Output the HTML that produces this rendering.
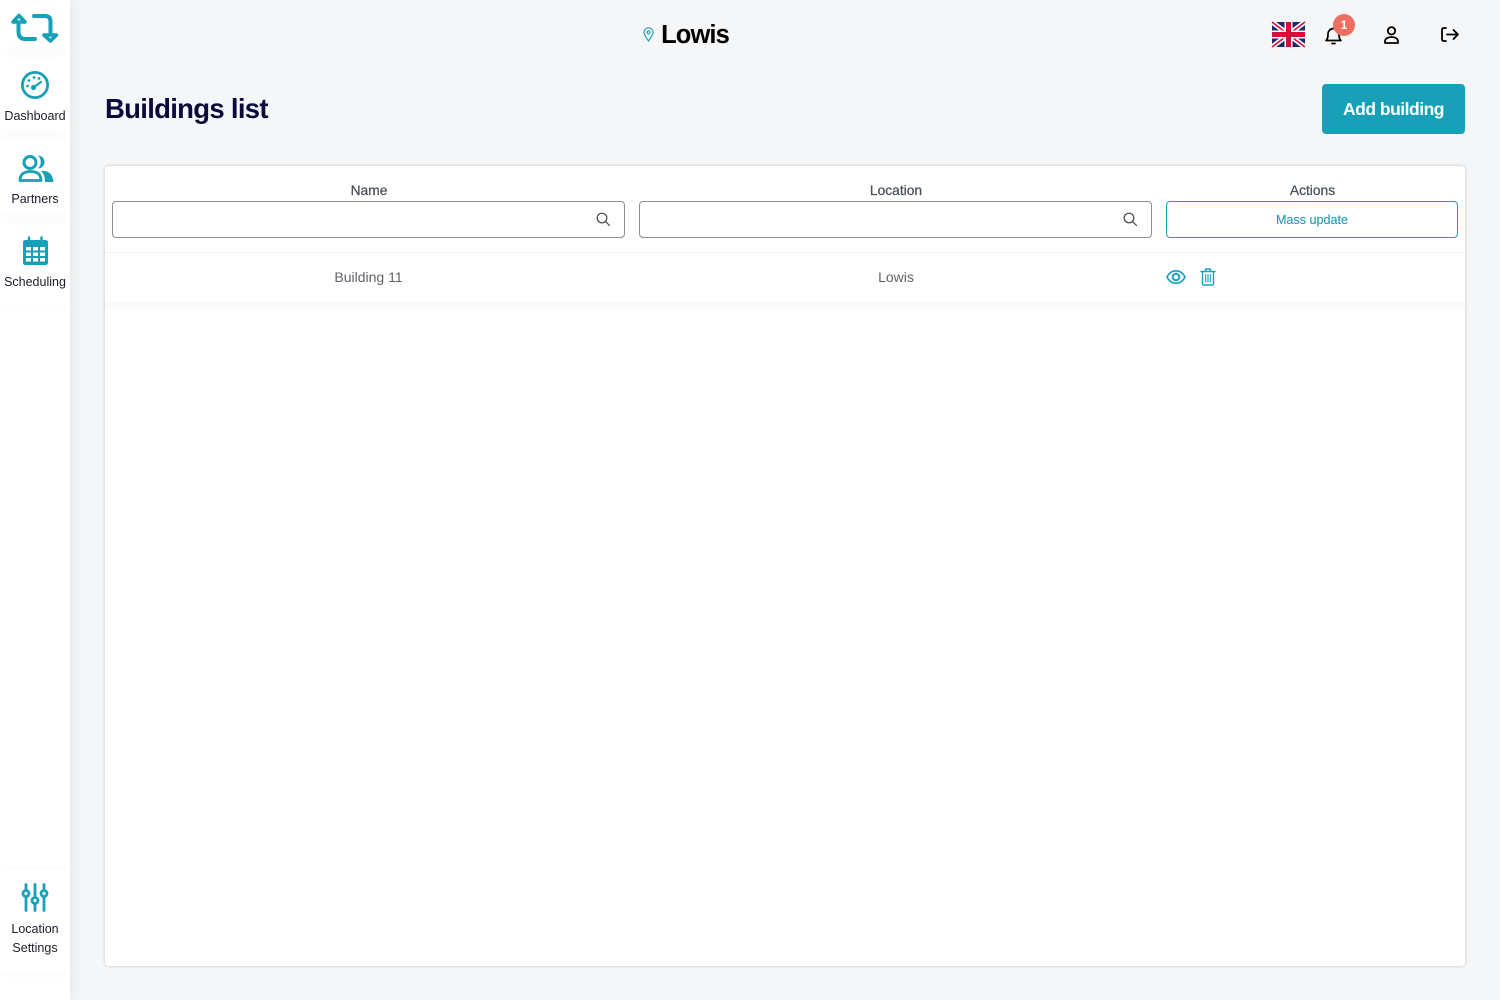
<!DOCTYPE html>
<html><head><meta charset="utf-8"><style>
html,body{margin:0;padding:0}
body{width:1500px;height:1000px;background:#f4f6f8;position:relative;overflow:hidden;font-family:"Liberation Sans",sans-serif}
.a{position:absolute}
.t{position:absolute;white-space:nowrap;text-align:center;transform:translateX(-50%)}
.side{left:0;top:0;width:70px;height:1000px;background:#fff;box-shadow:4px 0 10px rgba(90,100,150,.08);overflow:hidden}
.item{position:absolute;left:0;width:70px;background:#fff;box-shadow:0 0 12px rgba(0,0,0,.035)}
.nav{font-size:12.500px;color:#1c1c2c;line-height:19px}
svg{position:absolute;overflow:visible}
.card{left:105px;top:166px;width:1360px;height:800px;background:#fff;border-radius:4px;box-shadow:0 0 3px rgba(0,0,0,.22)}
.th{font-size:13.800px;color:#48505a;-webkit-text-stroke:.25px #48505a}
.inp{box-sizing:border-box;height:37px;top:201px;border:1px solid #8f8f8f;border-radius:4px;background:#fff}
.td{font-size:14px;color:#5f6368}
</style></head><body>
<div class="a side">
<div class="item" style="top:0;height:47px"></div>
<div class="item" style="top:57px;height:73px"></div>
<div class="item" style="top:140px;height:73px"></div>
<div class="item" style="top:223px;height:82px"></div>
<div class="item" style="top:870px;height:102px"></div>
</div>
<svg style="left:0;top:0" width="70" height="50" viewBox="0 0 70 50" fill="none" stroke="#17a0b7" stroke-width="4" stroke-linecap="round" stroke-linejoin="round"><path d="M18.500 23V32Q18.500 39 25.500 39H35"/><path d="M13 22L19 15.500L25 22Z" fill="#fff" stroke-width="3.600"/><path d="M34 16H45Q50.500 16 50.500 21.500V34"/><path d="M44 35H56.500L50.500 41Z" fill="#fff" stroke-width="3.600"/></svg>
<svg style="left:21px;top:71px" width="28" height="28" viewBox="0 0 28 28" fill="none" stroke="#17a0b7"><circle cx="14" cy="14" r="12.600" stroke-width="2.800"/><circle cx="12.500" cy="16.500" r="2.600" fill="#17a0b7" stroke="none"/><path d="M13 16L20 11" stroke-width="2.200" stroke-linecap="round"/><g fill="#17a0b7" stroke="none"><circle cx="6.500" cy="15" r="1.400"/><circle cx="8" cy="9.500" r="1.400"/><circle cx="13" cy="6.500" r="1.400"/><circle cx="18" cy="7.500" r="1.400"/></g></svg>
<div class="t nav" style="left:35px;top:107px">Dashboard</div>
<svg style="left:18px;top:153px" width="36" height="30" viewBox="0 0 36 30" fill="none" stroke="#17a0b7"><circle cx="12" cy="9.500" r="6" stroke-width="3"/><path d="M2 27.500C2 21 6 18.500 12.500 18.500S23 21 23 27.500Z" stroke-width="2.800" stroke-linejoin="round"/><path d="M20 2.500A6.500 6.500 0 1 1 20 15.500A9 9 0 0 0 20 2.500Z" fill="#17a0b7" stroke="none"/><path d="M23 18C31 17 35 22 35.500 29H27C27 24 26 21 23 18Z" fill="#17a0b7" stroke="none"/></svg>
<div class="t nav" style="left:35px;top:190px">Partners</div>
<svg style="left:23px;top:237px" width="25" height="28" viewBox="0 0 25 28"><path d="M2.500 3H22.500Q25 3 25 5.500V25.500Q25 28 22.500 28H2.500Q0 28 0 25.500V5.500Q0 3 2.500 3Z" fill="#17a0b7"/><path d="M6 .5V5M18.500 .5V5" stroke="#17a0b7" stroke-width="2.400" stroke-linecap="round"/><g fill="#fff"><rect x="3" y="10" width="5" height="3.500"/><rect x="10" y="10" width="5" height="3.500"/><rect x="17" y="10" width="5" height="3.500"/><rect x="3" y="15.500" width="5" height="3.500"/><rect x="10" y="15.500" width="5" height="3.500"/><rect x="17" y="15.500" width="5" height="3.500"/><rect x="3" y="21" width="5" height="3.500"/><rect x="10" y="21" width="5" height="3.500"/><rect x="17" y="21" width="5" height="3.500"/></g></svg>
<div class="t nav" style="left:35px;top:273px">Scheduling</div>
<svg style="left:22px;top:883px" width="26" height="29" viewBox="0 0 26 29" fill="none" stroke="#17a0b7" stroke-width="2.800" stroke-linecap="round"><path d="M4 1.500V7M4 14V27.500M13 1.500V14M13 21V27.500M22 1.500V7M22 14V27.500"/><circle cx="4" cy="10.500" r="3"/><circle cx="13" cy="17.500" r="3"/><circle cx="22" cy="10.500" r="3"/></svg>
<div class="t nav" style="left:35px;top:920px">Location</div>
<div class="t nav" style="left:35px;top:939px">Settings</div>

<svg style="left:643px;top:27px" width="11" height="15" viewBox="0 0 11 15" fill="none" stroke="#17a0b7" stroke-width="1.200"><path d="M5.500 14C3 10.500 1 8 1 5.300A4.500 4.500 0 0 1 10 5.300C10 8 8 10.500 5.500 14Z"/><circle cx="5.500" cy="5.300" r="1.500"/></svg>
<div class="t" style="left:695px;top:19px;font-size:25.500px;line-height:32px;font-weight:bold;color:#000;letter-spacing:-.9px">Lowis</div>

<svg style="left:1272px;top:22px" width="33" height="25" viewBox="0 0 33 25"><rect width="33" height="25" fill="#1b2a6b"/><path d="M0 0L33 25M33 0L0 25" stroke="#fff" stroke-width="5"/><path d="M0 0L33 25M33 0L0 25" stroke="#d0103a" stroke-width="1.600"/><path d="M16.500 0V25M0 12.500H33" stroke="#fff" stroke-width="8"/><path d="M16.500 0V25M0 12.500H33" stroke="#d0103a" stroke-width="5"/></svg>
<svg style="left:1325px;top:26px" width="17" height="19" viewBox="0 0 17 19" fill="none" stroke="#000" stroke-width="1.700" stroke-linejoin="round"><path d="M1 14.500C3 13 3 10.500 3 8A5.500 5.500 0 0 1 14 8C14 10.500 14 13 16 14.500Z"/><path d="M7 17.500H10" stroke-linecap="round"/></svg>
<div class="a" style="left:1333px;top:14px;width:22px;height:22px;border-radius:50%;background:#ee6e60;color:#fff;font-size:12px;font-weight:bold;line-height:22px;text-align:center">1</div>
<svg style="left:1384px;top:26px" width="15" height="18" viewBox="0 0 15 18" fill="none" stroke="#000" stroke-width="1.800" stroke-linejoin="round"><circle cx="7.500" cy="4.800" r="3.700"/><path d="M1 17V15.500C1 12.500 4 11 7.500 11S14 12.500 14 15.500V17Z"/></svg>
<svg style="left:1441px;top:27px" width="18" height="15" viewBox="0 0 18 15" fill="none" stroke="#000" stroke-width="1.800" stroke-linecap="round" stroke-linejoin="round"><path d="M5 1H3Q1 1 1 3V12Q1 14 3 14H5"/><path d="M6 7.500H17M12.500 3L17 7.500L12.500 12"/></svg>

<div class="a" style="left:105px;top:91px;font-size:27.500px;line-height:36px;font-weight:bold;color:#0a0a3c;white-space:nowrap;letter-spacing:-.7px">Buildings list</div>
<div class="a" style="left:1322px;top:84px;width:143px;height:50px;border-radius:4px;background:#17a0b7;color:#fff;font-size:17.500px;font-weight:bold;line-height:50px;text-align:center;white-space:nowrap;letter-spacing:-.5px">Add building</div>

<div class="a card"></div>
<div class="t th" style="left:369px;top:183px">Name</div>
<div class="t th" style="left:896px;top:183px">Location</div>
<div class="t th" style="left:1312.500px;top:183px">Actions</div>
<div class="a inp" style="left:112px;width:513px"></div>
<div class="a inp" style="left:639px;width:513px"></div>
<svg style="left:596px;top:212px" width="14" height="14" viewBox="0 0 14 14" fill="none" stroke="#444" stroke-width="1.200"><circle cx="6" cy="6" r="4.800"/><path d="M9.500 9.500L13.500 13.500" stroke-linecap="round"/></svg>
<svg style="left:1123px;top:212px" width="14" height="14" viewBox="0 0 14 14" fill="none" stroke="#444" stroke-width="1.200"><circle cx="6" cy="6" r="4.800"/><path d="M9.500 9.500L13.500 13.500" stroke-linecap="round"/></svg>
<div class="a" style="box-sizing:border-box;left:1166px;top:201px;width:292px;height:37px;border:1px solid #17a0b7;border-radius:4px;background:#fff;color:#2a9cb8;font-size:12.600px;line-height:36px;text-align:center;-webkit-text-stroke:.15px #2a9cb8">Mass update</div>
<div class="a" style="left:105px;top:252px;width:1360px;height:1px;background:#f3f3f3"></div>
<div class="a" style="left:105px;top:302px;width:1360px;height:14px;background:linear-gradient(#f9f9f9,#fff)"></div>
<div class="t td" style="left:368.500px;top:269px">Building 11</div>
<div class="t td" style="left:896px;top:269px">Lowis</div>
<svg style="left:1166px;top:269px" width="20" height="16" viewBox="0 0 20 16" fill="none" stroke="#17a0b7" stroke-width="1.600"><path d="M1 8C3 4 6 1.800 10 1.800S17 4 19 8C17 12 14 14.200 10 14.200S3 12 1 8Z"/><circle cx="10" cy="8" r="3.300" stroke-width="2"/></svg>
<svg style="left:1200px;top:268px" width="16" height="18" viewBox="0 0 16 18" fill="none" stroke="#17a0b7" stroke-width="1.400" stroke-linecap="round" stroke-linejoin="round"><path d="M1 3.500H15M5.500 3.500V1.500Q5.500 1 6 1H10Q10.500 1 10.500 1.500V3.500"/><path d="M2.500 3.500V15.500Q2.500 17 4 17H12Q13.500 17 13.500 15.500V3.500"/><path d="M5.700 6.500V14M8 6.500V14M10.300 6.500V14" stroke-width="1.100"/></svg>
</body></html>
